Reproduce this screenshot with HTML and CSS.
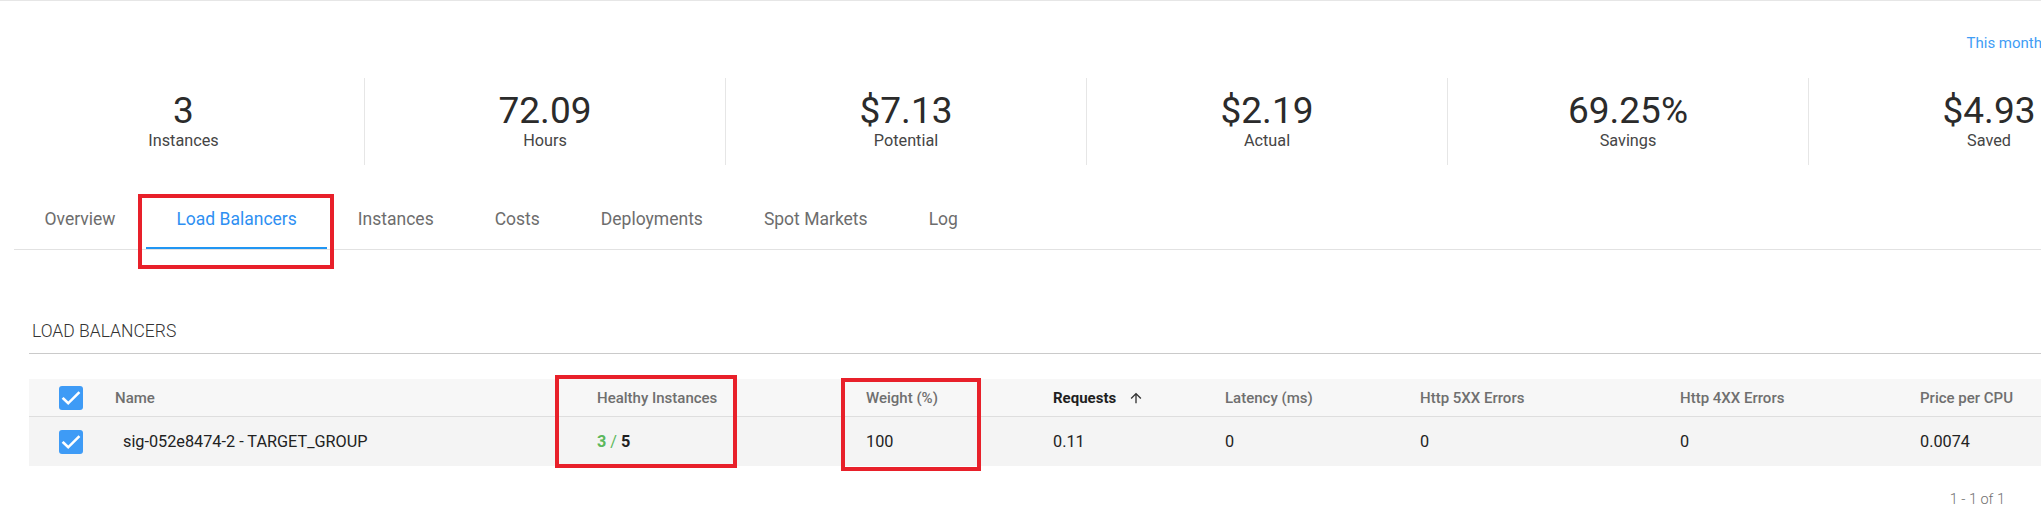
FILE: index.html
```html
<!DOCTYPE html>
<html lang="en">
<head>
<meta charset="utf-8">
<title>Load Balancers</title>
<link rel="stylesheet" href="styles.css">
</head>
<body>
<div class="page">
  <div class="period"><a class="period-link">This month</a></div>

  <div class="stats">
    <div class="stat"><div class="stat-value">3</div><div class="stat-label">Instances</div></div>
    <div class="stat"><div class="stat-value">72.09</div><div class="stat-label">Hours</div></div>
    <div class="stat"><div class="stat-value">$7.13</div><div class="stat-label">Potential</div></div>
    <div class="stat"><div class="stat-value">$2.19</div><div class="stat-label">Actual</div></div>
    <div class="stat"><div class="stat-value">69.25%</div><div class="stat-label">Savings</div></div>
    <div class="stat"><div class="stat-value">$4.93</div><div class="stat-label">Saved</div></div>
  </div>

  <nav class="tabs">
    <a class="tab">Overview</a>
    <a class="tab active">Load Balancers</a>
    <a class="tab">Instances</a>
    <a class="tab">Costs</a>
    <a class="tab">Deployments</a>
    <a class="tab">Spot Markets</a>
    <a class="tab">Log</a>
  </nav>

  <section class="lb">
    <h2 class="lb-title">Load Balancers</h2>
    <div class="table">
      <div class="row head">
        <div class="cell check"><span class="cb"><svg viewBox="0 0 24 24" width="24" height="24"><polyline points="4.5,12.8 9.2,17.3 19.5,7" fill="none" stroke="#fff" stroke-width="2.6" stroke-linecap="square"/></svg></span></div>
        <div class="cell">Name</div>
        <div class="cell">Healthy Instances</div>
        <div class="cell">Weight (%)</div>
        <div class="cell sorted">Requests <svg class="sort-icon" viewBox="0 0 24 24" width="16" height="16"><path d="M4 12l1.41 1.41L11 7.83V20h2V7.83l5.58 5.59L20 12l-8-8-8 8z" fill="#333"/></svg></div>
        <div class="cell">Latency (ms)</div>
        <div class="cell">Http 5XX Errors</div>
        <div class="cell">Http 4XX Errors</div>
        <div class="cell">Price per CPU</div>
      </div>
      <div class="row data">
        <div class="cell check"><span class="cb"><svg viewBox="0 0 24 24" width="24" height="24"><polyline points="4.5,12.8 9.2,17.3 19.5,7" fill="none" stroke="#fff" stroke-width="2.6" stroke-linecap="square"/></svg></span></div>
        <div class="cell name">sig-052e8474-2 - TARGET_GROUP</div>
        <div class="cell"><span class="healthy">3</span><span class="slash"> / </span><span class="total">5</span></div>
        <div class="cell">100</div>
        <div class="cell">0.11</div>
        <div class="cell">0</div>
        <div class="cell">0</div>
        <div class="cell">0</div>
        <div class="cell">0.0074</div>
      </div>
    </div>
    <div class="pager">1 - 1 of 1</div>
  </section>

  <div class="mark mark-tab"></div>
  <div class="mark mark-healthy"></div>
  <div class="mark mark-weight"></div>
</div>
</body>
</html>
```

FILE: styles.css
```css
html, body {
  margin: 0;
  padding: 0;
  background: #fff;
  overflow: hidden;
}

body {
  font-family: Roboto, "Liberation Sans", Arial, sans-serif;
  color: #212121;
}

.page {
  position: relative;
  width: 2200px;
  border-top: 1px solid #e6e6e6;
}

/* period selector */
.period {
  width: 2042px;
  display: flex;
  justify-content: flex-end;
  padding: 32px 0 25px;
}

.period-link {
  font-size: 15px;
  line-height: 20px;
  color: #3f9df5;
  white-space: nowrap;
}

/* stats */
.stats {
  display: flex;
  margin-left: 3px;
}

.stat {
  box-sizing: border-box;
  width: 361px;
  padding: 14px 0;
  text-align: center;
  border-left: 1px solid #e6e6e6;
}

.stat:first-child {
  border-left: 0;
}

.stat-value {
  font-size: 37px;
  line-height: 38px;
  color: #2b2b2b;
  margin-bottom: 1px;
}

.stat-label {
  font-size: 16.25px;
  line-height: 20px;
  color: #454545;
}

/* tabs */
.tabs {
  display: flex;
  margin-left: 14px;
  border-bottom: 1px solid #e2e2e2;
}

.tab {
  padding: 44px 30.5px 18px;
  font-size: 17.5px;
  line-height: 20px;
  color: #6d6d6d;
  border-bottom: 2px solid transparent;
  white-space: nowrap;
}

.tab.active {
  color: #2e8ff2;
  border-bottom-color: #2196f3;
}

/* load balancers section */
.lb {
  margin-left: 29px;
}

.lb-title {
  margin: 71px 0 0;
  padding: 0 0 12px 3px;
  font-size: 17.5px;
  line-height: 20px;
  font-weight: 300;
  text-transform: uppercase;
  color: #333;
  border-bottom: 1px solid #cacaca;
}

.table {
  margin-top: 25px;
}

.row {
  display: grid;
  grid-template-columns: 86px 482px 269px 187px 172px 195px 260px 240px 220px;
  align-items: center;
}

.row.head {
  height: 37px;
  background: #f7f7f7;
  border-bottom: 1px solid #dedede;
  font-size: 15px;
  font-weight: 500;
  color: #6f6f6f;
}

.row.data {
  height: 49px;
  background: #f4f4f4;
  font-size: 16.25px;
  color: #222;
}

.cell {
  white-space: nowrap;
  display: flex;
  align-items: center;
}

.cell.check {
  padding-left: 30px;
}

.cb {
  width: 24px;
  height: 24px;
  border-radius: 3px;
  background: #3e9bf6;
  display: flex;
}

.cell.name {
  padding-left: 8px;
}

.cell.sorted {
  color: #1f1f1f;
  font-weight: 700;
}

.sort-icon {
  margin-left: 12px;
}

.healthy {
  color: #5cb85c;
  font-weight: 700;
}

.slash {
  color: #5cb85c;
  white-space: pre;
}

.total {
  color: #1f1f1f;
  font-weight: 700;
}

.pager {
  width: 1976px;
  display: flex;
  justify-content: flex-end;
  margin-top: 24px;
  font-size: 14.5px;
  line-height: 20px;
  font-weight: 300;
  color: #6f6f6f;
}

/* red annotation boxes */
.mark {
  position: absolute;
  box-sizing: border-box;
  border: 4px solid #e8202a;
}

.mark-tab {
  left: 138px;
  top: 193px;
  width: 196px;
  height: 75px;
}

.mark-healthy {
  left: 555px;
  top: 374px;
  width: 182px;
  height: 93px;
}

.mark-weight {
  left: 841px;
  top: 377px;
  width: 140px;
  height: 93px;
}
```
